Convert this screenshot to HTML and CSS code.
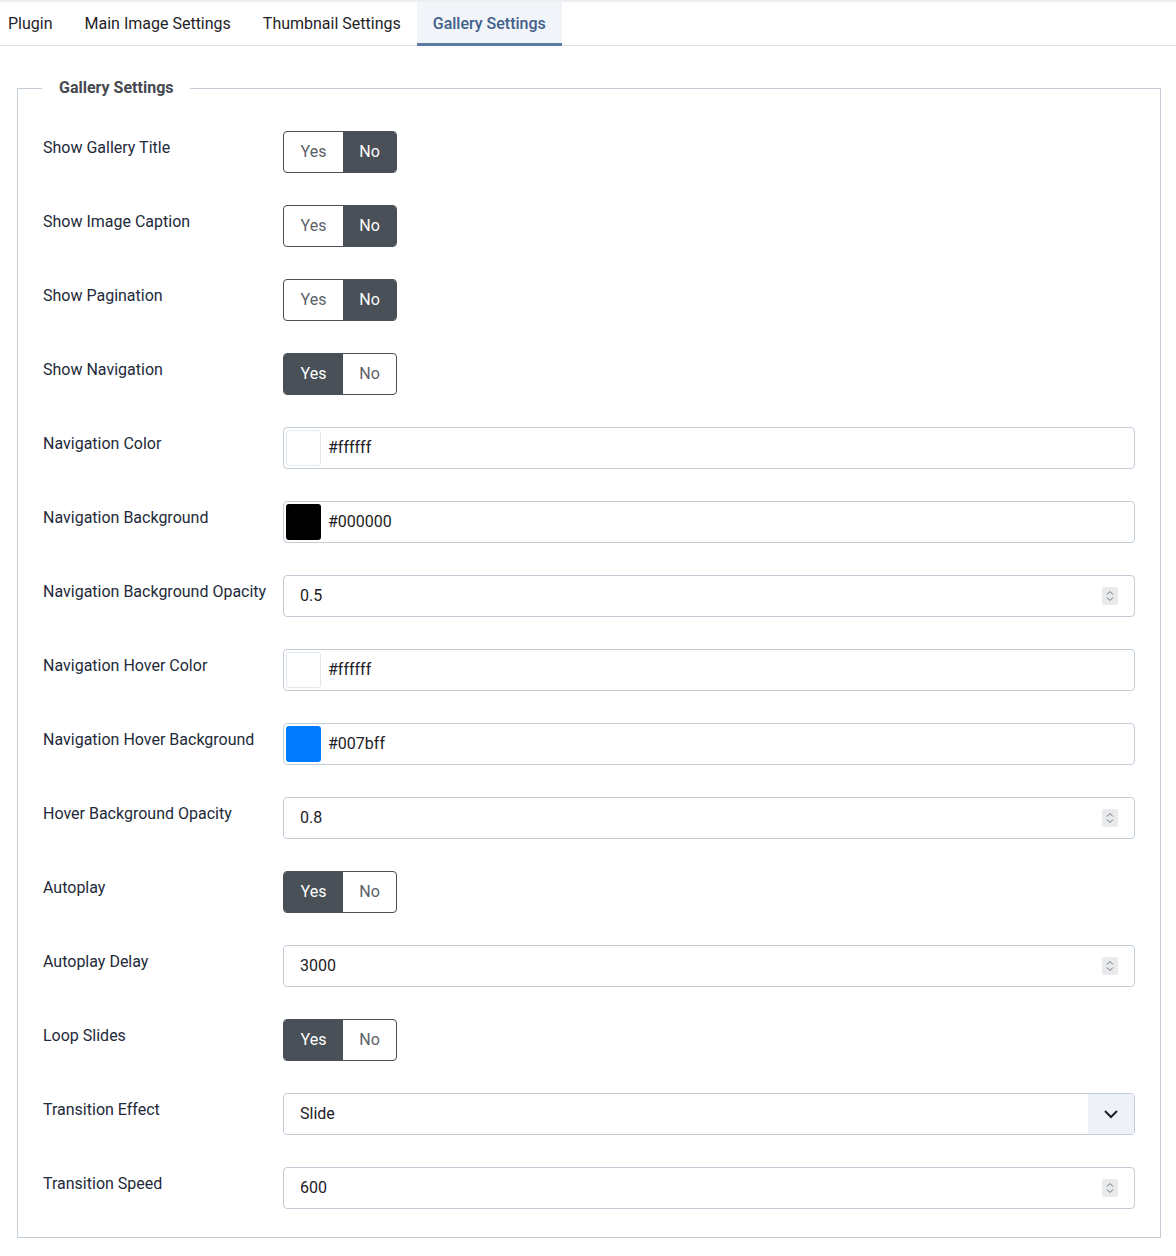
FILE: index.html
```html
<!DOCTYPE html>
<html>
 <head>
     <title>Gallery Settings</title>
     <link rel="stylesheet" href="styles.css">
     <meta charset="UTF-8">
 </head>
 <body>
    <div class="tabs">
      <div class="tab first">Plugin</div>
      <div class="tab">Main Image Settings</div>
      <div class="tab">Thumbnail Settings</div>
      <div class="tab active">Gallery Settings</div>
    </div>

    <div class="page">
     <fieldset class="options">
      <legend>Gallery Settings</legend>

      <div class="row">
        <label>Show Gallery Title</label>
        <div class="switch"><span>Yes</span><span class="on">No</span></div>
      </div>
      <div class="row">
        <label>Show Image Caption</label>
        <div class="switch"><span>Yes</span><span class="on">No</span></div>
      </div>
      <div class="row">
        <label>Show Pagination</label>
        <div class="switch"><span>Yes</span><span class="on">No</span></div>
      </div>
      <div class="row">
        <label>Show Navigation</label>
        <div class="switch"><span class="on">Yes</span><span>No</span></div>
      </div>
      <div class="row">
        <label>Navigation Color</label>
        <div class="field color"><i class="swatch sw_white"></i>#ffffff</div>
      </div>
      <div class="row">
        <label>Navigation Background</label>
        <div class="field color"><i class="swatch sw_black"></i>#000000</div>
      </div>
      <div class="row">
        <label>Navigation Background Opacity</label>
        <div class="field num">0.5<b class="spin"><svg width="16" height="18" viewBox="0 0 16 18"><rect width="16" height="18" rx="2" fill="#e9eaec"/><path d="M5 7.5 8 4.5 11 7.5M5 10.5 8 13.5 11 10.5" fill="none" stroke="#6b6f75" stroke-width="1"/></svg></b></div>
      </div>
      <div class="row">
        <label>Navigation Hover Color</label>
        <div class="field color"><i class="swatch sw_white"></i>#ffffff</div>
      </div>
      <div class="row">
        <label>Navigation Hover Background</label>
        <div class="field color"><i class="swatch sw_blue"></i>#007bff</div>
      </div>
      <div class="row">
        <label>Hover Background Opacity</label>
        <div class="field num">0.8<b class="spin"><svg width="16" height="18" viewBox="0 0 16 18"><rect width="16" height="18" rx="2" fill="#e9eaec"/><path d="M5 7.5 8 4.5 11 7.5M5 10.5 8 13.5 11 10.5" fill="none" stroke="#6b6f75" stroke-width="1"/></svg></b></div>
      </div>
      <div class="row">
        <label>Autoplay</label>
        <div class="switch"><span class="on">Yes</span><span>No</span></div>
      </div>
      <div class="row">
        <label>Autoplay Delay</label>
        <div class="field num">3000<b class="spin"><svg width="16" height="18" viewBox="0 0 16 18"><rect width="16" height="18" rx="2" fill="#e9eaec"/><path d="M5 7.5 8 4.5 11 7.5M5 10.5 8 13.5 11 10.5" fill="none" stroke="#6b6f75" stroke-width="1"/></svg></b></div>
      </div>
      <div class="row">
        <label>Loop Slides</label>
        <div class="switch"><span class="on">Yes</span><span>No</span></div>
      </div>
      <div class="row">
        <label>Transition Effect</label>
        <div class="field select">Slide<b class="caret"><svg width="16" height="10" viewBox="0 0 16 10"><path d="M2 2 8 8 14 2" fill="none" stroke="#1d2126" stroke-width="2"/></svg></b></div>
      </div>
      <div class="row">
        <label>Transition Speed</label>
        <div class="field num">600<b class="spin"><svg width="16" height="18" viewBox="0 0 16 18"><rect width="16" height="18" rx="2" fill="#e9eaec"/><path d="M5 7.5 8 4.5 11 7.5M5 10.5 8 13.5 11 10.5" fill="none" stroke="#6b6f75" stroke-width="1"/></svg></b></div>
      </div>
     </fieldset>
    </div>
 </body>
</html>
```

FILE: styles.css
```css
body {
    margin: 0;
    font-family: Roboto, "Liberation Sans", sans-serif;
    font-size: 16px;
    color: #22262a;
    background: #fff;
}

/* tab strip */
.tabs {
    display: flex;
    border-top: 2px solid #eceef1;
    border-bottom: 1px solid #dfe3e8;
}
.tab {
    padding: 3px 16px 0;
    line-height: 38px;
    color: #1f2327;
    border-bottom: 3px solid transparent;
    margin-bottom: -1px;
}
.tab.first {padding-left: 8px;}
.tab.active {
    background: #f1f4f8;
    color: #41608a;
    font-weight: 500;
    border-bottom-color: #5a7aa2;
}

/* settings block */
.page {padding: 30px 15px 18px 17px;}
.options {
    margin: 0;
    border: 1px solid #c3cdd8;
    padding: 31px 25px 28px 25px;
}
.options legend {
    margin-left: -1px;
    padding: 0 16px 0 17px;
    line-height: 24px;
    font-weight: bold;
    color: #454a50;
}

.row {display: flex; margin-bottom: 32px;}
.row:last-child {margin-bottom: 0;}
.row label {
    width: 240px;
    flex: none;
    padding-top: 5px;
    line-height: 24px;
    color: #1e2a3a;
}

/* yes / no switch */
.switch {
    display: flex;
    height: 42px;
    border: 1px solid #495057;
    border-radius: 4px;
    overflow: hidden;
    box-sizing: border-box;
}
.switch span {
    display: flex;
    align-items: center;
    justify-content: center;
    padding-bottom: 2px;
    box-sizing: border-box;
    color: #5b6168;
}
.switch span:first-child {width: 59px;}
.switch span:last-child {width: 53px;}
.switch span.on {background: #495057; color: #fff;}

/* inputs */
.field {
    flex: 1;
    height: 42px;
    box-sizing: border-box;
    border: 1px solid #c3cdd8;
    border-radius: 4px;
    display: flex;
    align-items: center;
    padding: 0 16px 2px;
    color: #1d2126;
}
.field.color {padding-left: 2px;}
.swatch {
    width: 35px;
    height: 36px;
    border-radius: 3px;
    margin: 2px 7px 0 0;
    box-sizing: border-box;
}
.sw_white {background: #fff; border: 1px solid #e3e6ea;}
.sw_black {background: #000;}
.sw_blue {background: #007bff;}

.spin {margin-left: auto; margin-top: 2px; display: flex;}
.field.select {padding-right: 0;}
.caret {
    margin: 2px 0 0 auto;
    width: 46px;
    height: 40px;
    background: #eef2f8;
    border-radius: 0 3px 3px 0;
    display: flex;
    align-items: center;
    justify-content: center;
}
```
